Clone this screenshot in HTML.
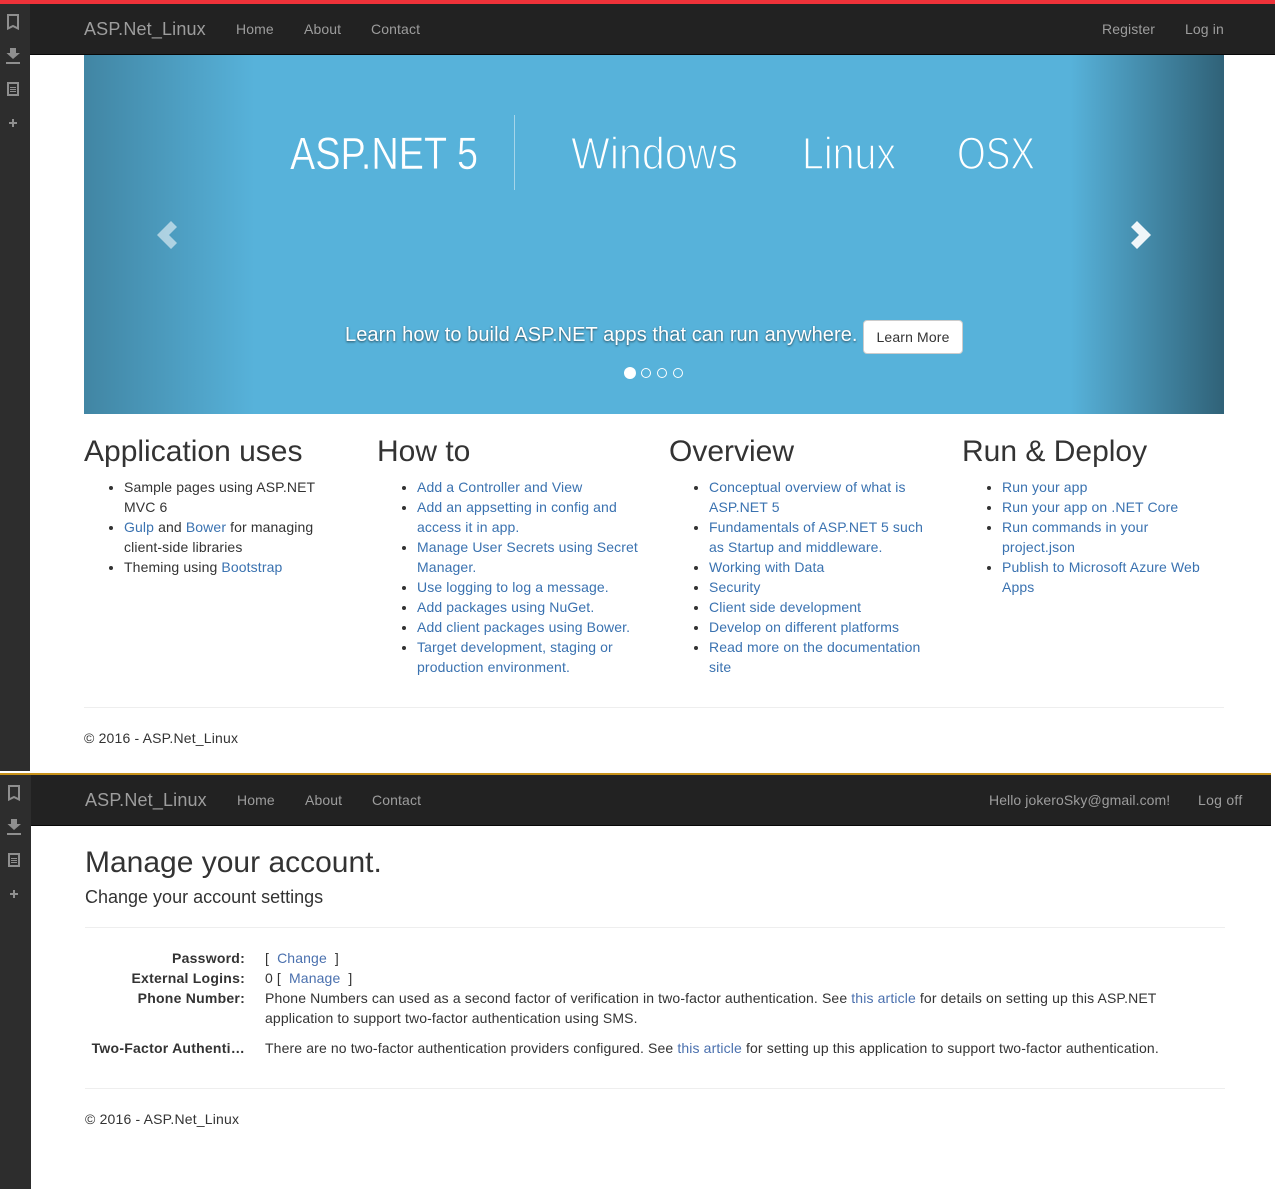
<!DOCTYPE html>
<html>
<head>
<meta charset="utf-8">
<title>ASP.Net_Linux</title>
<style>
html,body{margin:0;padding:0;background:#fff;}
body{position:relative;width:1276px;height:1189px;overflow:hidden;font:14px/20px "Liberation Sans",Arial,sans-serif;color:#333;}
.a{position:absolute;white-space:nowrap;}
a{color:#3a72b0;text-decoration:none;}
.n{position:absolute;white-space:nowrap;color:#9d9d9d;line-height:20px;letter-spacing:.12px;}
.b{position:absolute;white-space:nowrap;color:#9d9d9d;font-size:18px;line-height:20px;letter-spacing:.16px;}
.bar{position:absolute;background:#222;}
.side{position:absolute;background:#2d2d2d;}
ul{position:absolute;margin:0;padding:0 0 0 40px;top:477px;white-space:nowrap;letter-spacing:.12px;}
h2{position:absolute;margin:0;font-weight:400;font-size:30px;line-height:33px;top:435px;white-space:nowrap;color:#333;}
.hr{position:absolute;height:1px;background:#eee;}
.dt{position:absolute;width:245px;left:0;text-align:right;font-weight:700;white-space:nowrap;letter-spacing:.24px;}
.dd{position:absolute;left:265px;white-space:nowrap;letter-spacing:.13px;}
.dd a{color:#4a70ae;}
.f{letter-spacing:.18px;}
svg{position:absolute;left:0;top:0;}
</style>
</head>
<body>
<div class="a" style="left:0;top:0;width:1275px;height:4px;background:#ee3239"></div>
<div class="bar" style="left:30px;top:4px;width:1245px;height:50px;border-bottom:1px solid #080808"></div>
<div class="side" style="left:0;top:4px;width:30px;height:767px"></div>

<div class="b" style="left:84px;top:19px">ASP.Net_Linux</div>
<div class="n" style="left:236px;top:19px">Home</div>
<div class="n" style="left:304px;top:19px">About</div>
<div class="n" style="left:371px;top:19px">Contact</div>
<div class="n" style="left:1102px;top:19px">Register</div>
<div class="n" style="left:1185px;top:19px">Log in</div>

<!-- banner -->
<div class="a" style="left:84px;top:55px;width:1140px;height:359px;background:#57b2da"></div>
<div class="a" style="left:84px;top:55px;width:171px;height:359px;opacity:.5;background:linear-gradient(to right,rgba(0,0,0,.5),rgba(0,0,0,0))"></div>
<div class="a" style="left:1053px;top:55px;width:171px;height:359px;opacity:.9;background:linear-gradient(to right,rgba(0,0,0,0) 10%,rgba(0,0,0,.5))"></div>
<div class="a" style="left:514px;top:115px;width:1px;height:75px;background:#a5d5ea"></div>

<svg width="1276" height="1189" viewBox="0 0 1276 1189">
  <g font-family="Liberation Sans" font-size="45" fill="#fff" stroke="#57b2da">
    <text x="290" y="169" textLength="188" lengthAdjust="spacingAndGlyphs" stroke-width=".5">ASP.NET 5</text>
    <text x="571" y="169" textLength="167" lengthAdjust="spacingAndGlyphs" stroke-width="1.4">Windows</text>
    <text x="802" y="169" textLength="94" lengthAdjust="spacingAndGlyphs" stroke-width="1.4">Linux</text>
    <text x="957" y="169" textLength="78" lengthAdjust="spacingAndGlyphs" stroke-width="1.4">OSX</text>
  </g>
  <polygon points="157,235 171,221 177,227 169,235 177,243 171,249" fill="#fff" opacity=".55"/>
  <polygon points="1151,235 1137,221 1131,227 1139,235 1131,243 1137,249" fill="#fff" opacity=".92"/>
  <circle cx="630" cy="373" r="6" fill="#fff"/>
  <circle cx="646" cy="373" r="4.5" fill="none" stroke="#fff"/>
  <circle cx="662" cy="373" r="4.5" fill="none" stroke="#fff"/>
  <circle cx="678" cy="373" r="4.5" fill="none" stroke="#fff"/>

  <!-- sidebar icons, first -->
  <g fill="none" stroke="#8f8f8f">
    <path d="M8 15H18V28.500L13 26L8 28.500Z" stroke-width="2"/>
    <path d="M10 48H16V53H20L13 59L6.500 53H10Z" fill="#8f8f8f" stroke="none"/>
    <path d="M6 63H20" stroke-width="2"/>
    <rect x="8" y="83" width="10" height="12" stroke-width="2"/>
    <path d="M10 87.500H16M10 89.500H16M10 91.500H16" stroke-width="1"/>
    <path d="M13 119V127M9 123H17" stroke-width="2"/>
  </g>
</svg>

<div class="a" style="left:345px;top:323px;font-size:20px;line-height:24px;color:#fff;letter-spacing:.075px;text-shadow:0 1px 2px rgba(0,0,0,.6)">Learn how to build ASP.NET apps that can run anywhere.</div>
<div class="a" style="left:863px;top:320px;width:98px;height:32px;line-height:32px;text-align:center;background:#fff;border:1px solid #ccc;border-radius:4px;color:#333;letter-spacing:.15px">Learn More</div>

<!-- columns -->
<h2 style="left:84px">Application uses</h2>
<ul style="left:84px">
<li>Sample pages using ASP.NET<br>MVC 6</li>
<li><a>Gulp</a> and <a>Bower</a> for managing<br>client-side libraries</li>
<li>Theming using <a>Bootstrap</a></li>
</ul>
<h2 style="left:377px">How to</h2>
<ul style="left:377px">
<li><a>Add a Controller and View</a></li>
<li><a>Add an appsetting in config and<br>access it in app.</a></li>
<li><a>Manage User Secrets using Secret<br>Manager.</a></li>
<li><a>Use logging to log a message.</a></li>
<li><a>Add packages using NuGet.</a></li>
<li><a>Add client packages using Bower.</a></li>
<li><a>Target development, staging or<br>production environment.</a></li>
</ul>
<h2 style="left:669px">Overview</h2>
<ul style="left:669px">
<li><a>Conceptual overview of what is<br>ASP.NET 5</a></li>
<li><a>Fundamentals of ASP.NET 5 such<br>as Startup and middleware.</a></li>
<li><a>Working with Data</a></li>
<li><a>Security</a></li>
<li><a>Client side development</a></li>
<li><a>Develop on different platforms</a></li>
<li><a>Read more on the documentation<br>site</a></li>
</ul>
<h2 style="left:962px">Run &amp; Deploy</h2>
<ul style="left:962px">
<li><a>Run your app</a></li>
<li><a>Run your app on .NET Core</a></li>
<li><a>Run commands in your<br>project.json</a></li>
<li><a>Publish to Microsoft Azure Web<br>Apps</a></li>
</ul>

<div class="hr" style="left:84px;top:707px;width:1140px"></div>
<div class="a f" style="left:84px;top:728px">© 2016 - ASP.Net_Linux</div>

<!-- second screenshot -->
<div class="a" style="left:0;top:773px;width:1271px;height:2px;background:#c8921a"></div>
<div class="bar" style="left:31px;top:775px;width:1240px;height:50px;border-bottom:1px solid #080808"></div>
<div class="side" style="left:0;top:775px;width:31px;height:414px"></div>

<svg width="1276" height="1189" viewBox="0 0 1276 1189">
  <g transform="translate(1 771)" fill="none" stroke="#8f8f8f">
    <path d="M8 15H18V28.500L13 26L8 28.500Z" stroke-width="2"/>
    <path d="M10 48H16V53H20L13 59L6.500 53H10Z" fill="#8f8f8f" stroke="none"/>
    <path d="M6 63H20" stroke-width="2"/>
    <rect x="8" y="83" width="10" height="12" stroke-width="2"/>
    <path d="M10 87.500H16M10 89.500H16M10 91.500H16" stroke-width="1"/>
    <path d="M13 119V127M9 123H17" stroke-width="2"/>
  </g>
</svg>

<div class="b" style="left:85px;top:790px">ASP.Net_Linux</div>
<div class="n" style="left:237px;top:790px">Home</div>
<div class="n" style="left:305px;top:790px">About</div>
<div class="n" style="left:372px;top:790px">Contact</div>
<div class="n" style="left:989px;top:790px;letter-spacing:.08px">Hello jokeroSky@gmail.com!</div>
<div class="n" style="left:1198px;top:790px;letter-spacing:.28px">Log off</div>

<div class="a" style="left:85px;top:846px;font-size:30px;line-height:33px">Manage your account.</div>
<div class="a" style="left:85px;top:887px;font-size:18px;line-height:20px">Change your account settings</div>
<div class="hr" style="left:85px;top:927px;width:1140px"></div>

<div class="dt" style="top:948px">Password:</div>
<div class="dd" style="top:948px">[&nbsp; <a>Change</a> &nbsp;]</div>
<div class="dt" style="top:968px">External Logins:</div>
<div class="dd" style="top:968px">0 [&nbsp; <a>Manage</a> &nbsp;]</div>
<div class="dt" style="top:988px">Phone Number:</div>
<div class="dd" style="top:988px">Phone Numbers can used as a second factor of verification in two-factor authentication. See <a>this article</a> for details on setting up this ASP.NET<br>application to support two-factor authentication using SMS.</div>
<div class="dt" style="top:1038px">Two-Factor Authenti…</div>
<div class="dd" style="top:1038px">There are no two-factor authentication providers configured. See <a>this article</a> for setting up this application to support two-factor authentication.</div>

<div class="hr" style="left:85px;top:1088px;width:1140px"></div>
<div class="a f" style="left:85px;top:1109px">© 2016 - ASP.Net_Linux</div>
</body>
</html>
